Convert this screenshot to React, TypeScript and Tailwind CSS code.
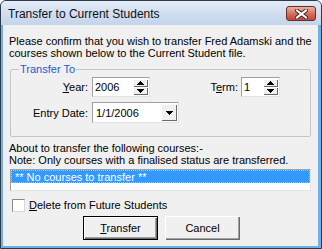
import React from "react";

function UpTri() {
  return (
    <svg width="7" height="4" viewBox="0 0 7 4" shapeRendering="crispEdges">
      <polygon points="3.5,0 7,4 0,4" fill="#000" />
    </svg>
  );
}

function DownTri() {
  return (
    <svg width="7" height="4" viewBox="0 0 7 4" shapeRendering="crispEdges">
      <polygon points="0,0 7,0 3.5,4" fill="#000" />
    </svg>
  );
}

function Spin() {
  return (
    <div className="flex flex-col w-[15px] h-[16px] mr-[1px]">
      <div className="h-[8px] flex items-center justify-center bg-[#f0f0f0] shadow-[inset_1px_1px_#ffffff,inset_-1px_-1px_#696969]">
        <UpTri />
      </div>
      <div className="h-[8px] flex items-center justify-center bg-[#f0f0f0] shadow-[inset_1px_1px_#ffffff,inset_-1px_-1px_#696969]">
        <DownTri />
      </div>
    </div>
  );
}

function SpinBox({ value, w }: { value: string; w: string }) {
  return (
    <div
      className={`${w} h-[20px] flex items-center bg-white border border-t-[#a0a0a0] border-l-[#a0a0a0] border-b-[#e3e3e3] border-r-[#e3e3e3]`}
    >
      <span className="flex-1 pl-[2px] leading-[12px]">{value}</span>
      <Spin />
    </div>
  );
}

function DropDown({ value }: { value: string }) {
  return (
    <div className="w-[87px] h-[21px] flex items-center bg-white border border-t-[#a0a0a0] border-l-[#a0a0a0] border-b-[#e3e3e3] border-r-[#e3e3e3]">
      <span className="flex-1 pl-[3px] leading-[12px]">{value}</span>
      <div className="w-[16px] h-[17px] mr-[1px] flex items-center justify-center bg-[#f0f0f0] shadow-[inset_1px_1px_#ffffff,inset_-1px_-1px_#696969]">
        <DownTri />
      </div>
    </div>
  );
}

function CloseX() {
  return (
    <svg width="13" height="10" viewBox="0 0 13 10">
      <path d="M2 1.5 L11 8.5 M11 1.5 L2 8.5" stroke="#3a2a2a" strokeWidth="4" strokeLinecap="square" />
      <path d="M2 1.5 L11 8.5 M11 1.5 L2 8.5" stroke="#ffffff" strokeWidth="2" strokeLinecap="square" />
    </svg>
  );
}

export default function App() {
  return (
    <div className="w-[322px] h-[249px] flex flex-col border border-[#2d3a4a] rounded-t-[6px] bg-[#6fb0e6] overflow-hidden text-[11px] text-black font-['Liberation_Sans',Arial,sans-serif]">
      {/* Title bar */}
      <div className="h-[24px] flex items-center bg-gradient-to-b from-[#e4ecf6] via-[#d2dff0] to-[#c3d4ea]">
        <span className="pl-[7px] flex-1 text-[12px] leading-[14px] text-[#101010] pt-[1px]">
          Transfer to Current Students
        </span>
        <div className="mr-[5px] mt-[1px] w-[30px] h-[15px] rounded-[3px] border border-[#6a2a25] flex items-center justify-center bg-gradient-to-b from-[#eab2a5] via-[#d7705f] to-[#c0463b]">
          <CloseX />
        </div>
      </div>

      {/* Client area */}
      <div className="ml-[2px] mr-[3px] h-[221px] bg-[#f0f0f0] flex flex-col">
        <p className="pl-[6px] pt-[10px] leading-[12px]">
          Please confirm that you wish to transfer Fred Adamski and the
          <br />
          courses shown below to the Current Student file.
        </p>

        <fieldset className="ml-[7px] w-[301px] mt-[4px] border border-[#c5c5c5] rounded-[2px] pb-[13px]">
          <legend className="ml-[8px] px-[1px] leading-[12px] text-[#1c5cd0]">Transfer To</legend>
          <div className="flex items-center mt-[2px]">
            <span className="w-[77px] text-right leading-[12px]">
              <span className="underline">Y</span>ear:
            </span>
            <div className="ml-[4px]">
              <SpinBox value="2006" w="w-[58px]" />
            </div>
            <span className="w-[88px] text-right leading-[12px]">
              T<span className="underline">e</span>rm:
            </span>
            <div className="ml-[3px]">
              <SpinBox value="1" w="w-[39px]" />
            </div>
          </div>
          <div className="flex items-center mt-[5px]">
            <span className="w-[77px] text-right leading-[12px]">Entry Date:</span>
            <div className="ml-[4px]">
              <DropDown value="1/1/2006" />
            </div>
          </div>
        </fieldset>

        <p className="pl-[6px] mt-[5px] leading-[12px]">
          About to transfer the following courses:-
          <br />
          Note: Only courses with a finalised status are transferred.
        </p>

        <div className="ml-[7px] w-[301px] h-[22px] mt-[3px] bg-white border border-t-[#a0a0a0] border-l-[#a0a0a0] border-b-[#e3e3e3] border-r-[#e3e3e3]">
          <div className="h-[13px] bg-[#3399ff] text-white leading-[13px] pl-[3px] border border-dotted border-[#a8d2ff]">
            ** No courses to transfer **
          </div>
        </div>

        <div className="flex items-center ml-[9px] mt-[8px]">
          <div className="w-[13px] h-[13px] bg-white border border-t-[#8a8a8a] border-l-[#8a8a8a] border-b-[#d8d8d8] border-r-[#d8d8d8]" />
          <span className="ml-[4px] leading-[13px]">
            <span className="underline">D</span>elete from Future Students
          </span>
        </div>

        <div className="flex pl-[80px] mt-[4px] gap-[7px]">
          <div className="w-[75px] h-[24px] border border-black bg-[#f0f0f0] flex items-center justify-center shadow-[inset_1px_1px_#ffffff,inset_-1px_-1px_#696969,inset_-2px_-2px_#a0a0a0]">
            <span>
              <span className="underline">T</span>ransfer
            </span>
          </div>
          <div className="w-[75px] h-[24px] bg-[#f0f0f0] flex items-center justify-center shadow-[inset_1px_1px_#ffffff,inset_-1px_-1px_#696969,inset_-2px_-2px_#a0a0a0]">
            Cancel
          </div>
        </div>
      </div>
    </div>
  );
}
